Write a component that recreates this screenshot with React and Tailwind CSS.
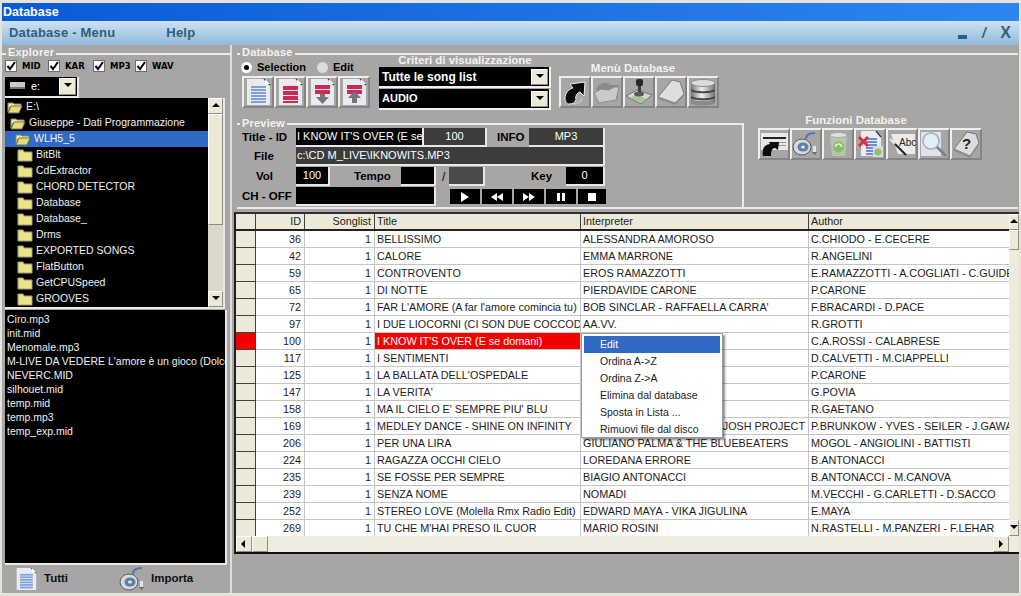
import React from 'react';

const SONGS = [
  ['36', 'BELLISSIMO', 'ALESSANDRA AMOROSO', 'C.CHIODO - E.CECERE'],
  ['42', 'CALORE', 'EMMA MARRONE', 'R.ANGELINI'],
  ['59', 'CONTROVENTO', 'EROS RAMAZZOTTI', 'E.RAMAZZOTTI - A.COGLIATI - C.GUIDETTI'],
  ['65', 'DI NOTTE', 'PIERDAVIDE CARONE', 'P.CARONE'],
  ['72', "FAR L'AMORE (A far l'amore comincia tu)", "BOB SINCLAR - RAFFAELLA CARRA'", 'F.BRACARDI - D.PACE'],
  ['97', 'I DUE LIOCORNI (CI SON DUE COCCODRILLI)', 'AA.VV.', 'R.GROTTI'],
  ['100', "I KNOW IT'S OVER (E se domani)", '', 'C.A.ROSSI - CALABRESE'],
  ['117', 'I SENTIMENTI', '', 'D.CALVETTI - M.CIAPPELLI'],
  ['125', "LA BALLATA DELL'OSPEDALE", '', 'P.CARONE'],
  ['147', "LA VERITA'", '', 'G.POVIA'],
  ['158', "MA IL CIELO E' SEMPRE PIU' BLU", '', 'R.GAETANO'],
  // il resto dell'interprete sta sotto il menu: si vede solo la coda
  ['169', 'MEDLEY DANCE - SHINE ON INFINITY', 'U JOSH PROJECT', 'P.BRUNKOW - YVES - SEILER - J.GAWA'],
  ['206', 'PER UNA LIRA', 'GIULIANO PALMA & THE BLUEBEATERS', 'MOGOL - ANGIOLINI - BATTISTI'],
  ['224', 'RAGAZZA OCCHI CIELO', 'LOREDANA ERRORE', 'B.ANTONACCI'],
  ['235', 'SE FOSSE PER SEMPRE', 'BIAGIO ANTONACCI', 'B.ANTONACCI - M.CANOVA'],
  ['239', 'SENZA NOME', 'NOMADI', 'M.VECCHI - G.CARLETTI - D.SACCO'],
  ['252', 'STEREO LOVE (Molella Rmx Radio Edit)', 'EDWARD MAYA - VIKA JIGULINA', 'E.MAYA'],
  ['269', "TU CHE M'HAI PRESO IL CUOR", 'MARIO ROSINI', 'N.RASTELLI - M.PANZERI - F.LEHAR'],
];

const FOLDERS = [
  ['E:\\', 0, true],
  ['Giuseppe - Dati Programmazione', 1, true],
  ['WLH5_5', 2, true],
  ['BitBlt', 3],
  ['CdExtractor', 3],
  ['CHORD DETECTOR', 3],
  ['Database', 3],
  ['Database_', 3],
  ['Drms', 3],
  ['EXPORTED SONGS', 3],
  ['FlatButton', 3],
  ['GetCPUSpeed', 3],
  ['GROOVES', 3],
];

const FILES = [
  'Ciro.mp3',
  'init.mid',
  'Menomale.mp3',
  "M-LIVE DA VEDERE L'amore è un gioco (Dolce",
  'NEVERC.MID',
  'silhouet.mid',
  'temp.mid',
  'temp.mp3',
  'temp_exp.mid',
];

const MENU_ITEMS = ['Edit', 'Ordina A->Z', 'Ordina Z->A', 'Elimina dal database', 'Sposta in Lista ...', 'Rimuovi file dal disco'];

const Doc = ({ lines = '#7f9fe0', rows = [8, 11, 14, 17, 20, 23], children }) => (
  <svg viewBox="0 0 28 28" className="w-[28px] h-[28px]">
    <path d="M3 1h18l5 5v21H3z" fill="#e9ebef" />
    <path d="M20 1l6 6" stroke="#333" strokeWidth="1.200" />
    <path d="M21 1l5 5h-5z" fill="#fff" />
    {rows.map((y) => (
      <rect key={y} x="7" y={y} width="15" height="2" fill={lines} />
    ))}
    {children}
  </svg>
);

const Speaker = () => (
  <svg viewBox="0 0 28 28" className="w-[28px] h-[28px]">
    <ellipse cx="10" cy="17" rx="9" ry="8" fill="#d5d8dc" stroke="#55585c" />
    <ellipse cx="11" cy="17" rx="5.5" ry="4.5" fill="#5f7fa3" />
    <ellipse cx="11" cy="17" rx="2" ry="1.6" fill="#dfe6ee" />
    <path d="M14 9c0-5 4-6 9-6" fill="none" stroke="#4c76b0" strokeWidth="2" />
    <rect x="21" y="16" width="3" height="6" fill="#e4e4e4" />
    <path d="M20 22h5l-2.500 3z" fill="#666" />
  </svg>
);

const ICONS = {
  blue: <Doc />,
  red: <Doc lines="#cf2a55" rows={[8, 10, 13, 15, 18, 20, 23]} />,
  redDown: (
    <Doc lines="#cf2a55" rows={[7, 9, 12, 14]}>
      <path d="M12 16h5v3h4l-6.500 7-6.500-7h4z" fill="#73767c" />
    </Doc>
  ),
  redUp: (
    <Doc lines="#cf2a55" rows={[7, 9, 12, 14]}>
      <path d="M14.500 13l6.500 7h-4v5h-5v-5h-4z" fill="#73767c" />
    </Doc>
  ),
  arrow: (
    <svg viewBox="0 0 28 28" className="w-[28px] h-[28px]">
      <path d="M8 26c-2 0-4-2-4-6 0-5 4-9 8-10l-3-4 15-2-1 14-4-4c-3 1-5 4-4 8-1 3-4 4-7 4z" fill="#0b0b0b" stroke="#f2f2f2" strokeWidth="1" />
      <path d="M12 26c4 0 8-2 9-6" fill="none" stroke="#bfc0bf" strokeWidth="2" />
    </svg>
  ),
  folder: (
    <svg viewBox="0 0 28 28" className="w-[28px] h-[28px]">
      <path d="M3 10l6-5h6l2 2h9l-2 15H6z" fill="#8a8c8c" />
      <path d="M1 15l7-4 8 1 5-3h5l-3 13-17 3z" fill="#c9cbcb" stroke="#8b8d8d" />
    </svg>
  ),
  joystick: (
    <svg viewBox="0 0 28 28" className="w-[28px] h-[28px]">
      <path d="M1 18l11-6 15 5-11 9z" fill="#d6d8d4" stroke="#707270" />
      <path d="M5 20l11 5 6-4-11-4z" fill="#a9c59a" />
      <rect x="13" y="5" width="3" height="11" fill="#3b3d40" />
      <rect x="11" y="1" width="7" height="7" rx="2" fill="#25272a" />
      <ellipse cx="14" cy="16" rx="5" ry="2.500" fill="#56585b" />
    </svg>
  ),
  diamond: (
    <svg viewBox="0 0 28 28" className="w-[28px] h-[28px]">
      <path d="M15 2l8 2 4 12-9 9-17-6z" fill="#dededc" stroke="#7c7c7a" />
      <path d="M1 19l17 6 9-9v2l-9 9-17-6z" fill="#8e8e8c" />
    </svg>
  ),
  database: (
    <svg viewBox="0 0 28 28" className="w-[28px] h-[28px]">
      <defs>
        <linearGradient id="silver" x1="0" x2="1" y1="0" y2="0">
          <stop offset="0" stopColor="#777" />
          <stop offset="0.45" stopColor="#f0f0f0" />
          <stop offset="1" stopColor="#6f6f6f" />
        </linearGradient>
      </defs>
      <rect x="2" y="5" width="24" height="20" fill="url(#silver)" />
      <path d="M2 11c4 3 20 3 24 0v2c-4 3-20 3-24 0zM2 18c4 3 20 3 24 0v2c-4 3-20 3-24 0z" fill="#454545" />
      <ellipse cx="14" cy="5" rx="12" ry="3.500" fill="#dcdcdc" stroke="#8c8c8c" />
      <ellipse cx="14" cy="25" rx="12" ry="2.500" fill="#8a8a8a" />
    </svg>
  ),
  bars: (
    <svg viewBox="0 0 28 28" className="w-[28px] h-[28px]">
      <rect x="1" y="3" width="27" height="17" fill="#e8e8e6" />
      <rect x="3" y="7" width="23" height="2" fill="#222" />
      <rect x="16" y="12" width="10" height="1" fill="#999" />
      <rect x="16" y="15" width="10" height="1" fill="#999" />
      <path d="M3 26c-1-6 0-11 7-12l-1-2 10 0-1 8-3-2c-3 0-4 3-4 8z" fill="#0b0b0b" />
    </svg>
  ),
  speaker: <Speaker />,
  bin: (
    <svg viewBox="0 0 28 28" className="w-[28px] h-[28px]">
      <path d="M6 5h17l-2 21H8z" fill="#b9c3b4" />
      <ellipse cx="14.500" cy="5" rx="8.500" ry="2.500" fill="#dfe2dc" stroke="#a4aaa1" />
      <circle cx="14.500" cy="17" r="5.500" fill="#86bd5e" />
      <path d="M11.500 17a3 3 0 0 1 6 0" fill="none" stroke="#e8f4df" strokeWidth="1.500" />
    </svg>
  ),
  docX: (
    <svg viewBox="0 0 28 28" className="w-[28px] h-[28px]">
      <path d="M5 1h15l5 5v20H5z" fill="#e9ebef" />
      <path d="M20 1l5 6" stroke="#333" strokeWidth="1.200" />
      {[8, 11, 14, 17, 20, 23].map((y) => (
        <rect key={y} x="10" y={y} width="11" height="2" fill="#6d8cd2" />
      ))}
      <path d="M3 7l9 9M12 7l-9 9" stroke="#d9303c" strokeWidth="3" />
      <rect x="17" y="16" width="10" height="11" fill="#d7dcd3" />
      <circle cx="22" cy="22" r="3.500" fill="#8fc06a" />
    </svg>
  ),
  abc: (
    <svg viewBox="0 0 28 28" className="w-[28px] h-[28px]">
      <path d="M3 4h24v20H10z" fill="#ececea" />
      <text x="11" y="16" fontSize="10" fontFamily="Liberation Sans, sans-serif" fill="#222">Abc</text>
      <path d="M6 13l12 12" stroke="#222" strokeWidth="2" />
      <path d="M2 9l5 5" stroke="#e9e9e9" strokeWidth="2" />
    </svg>
  ),
  search: (
    <svg viewBox="0 0 28 28" className="w-[28px] h-[28px]">
      <rect x="1" y="2" width="20" height="24" fill="#dfe3ea" />
      <circle cx="11" cy="11" r="8" fill="#e4eef7" stroke="#9ab0c6" strokeWidth="1.500" />
      <path d="M17 17l9 9" stroke="#7c8084" strokeWidth="2.500" />
    </svg>
  ),
  help: (
    <svg viewBox="0 0 28 28" className="w-[28px] h-[28px]">
      <path d="M15 2l9 2 3 9-9 13-16-7z" fill="#dcdcda" stroke="#777" />
      <path d="M2 19l16 7 9-13v2l-9 13-16-7z" fill="#8e8e8c" />
      <text x="10" y="19" fontSize="15" fontWeight="700" fontFamily="Liberation Sans, sans-serif" fill="#222">?</text>
    </svg>
  ),
};

const IconButton = ({ name }) => (
  <div className="w-[32px] h-[32px] shrink-0 flex items-center justify-center border-2 border-t-[#efefed] border-l-[#efefed] border-b-[#858482] border-r-[#858482] bg-[#a7a6a4]">
    {ICONS[name]}
  </div>
);

const Legend = ({ children, className = '' }) => (
  <div className={`h-[14px] w-fit bg-[#a7a6a4] px-[2px] text-[11px] leading-[14px] font-bold tracking-[0.2px] text-[#f2f2f0] ${className}`}>
    {children}
  </div>
);

const Tri = ({ dir }) => {
  const points = { up: '0,5 8,5 4,1', down: '0,1 8,1 4,5', left: '5,0 5,8 1,4', right: '2,0 2,8 6,4' }[dir];
  return (
    <svg viewBox="0 0 8 8" className="w-[8px] h-[8px]">
      <polygon points={points} fill="#000" />
    </svg>
  );
};

const ScrollButton = ({ dir, className = '' }) => (
  <div className={`shrink-0 flex items-center justify-center bg-[#ece9d8] border border-t-white border-l-white border-b-[#8f8d80] border-r-[#8f8d80] ${className}`}>
    <Tri dir={dir} />
  </div>
);

const Combo = ({ text, className = '', textClass = '' }) => (
  <div className={`flex items-center bg-black border-b-2 border-r-2 border-[#f0f0ee] ${className}`}>
    <div className={`flex-1 min-w-0 truncate text-white ${textClass}`}>{text}</div>
    <ScrollButton dir="down" className="w-[17px] h-[16px] mr-[1px]" />
  </div>
);

const FileType = ({ label, className }) => (
  <div className={`flex items-center ${className}`}>
    <div className="w-[12px] h-[12px] bg-white border border-[#6d6d6b] flex items-center justify-center shrink-0">
      <svg viewBox="0 0 10 10" className="w-[10px] h-[10px]">
        <path d="M1.500 5l2.500 3 5-7" fill="none" stroke="#000" strokeWidth="2" />
      </svg>
    </div>
    <span className="ml-[5px] font-['DejaVu_Sans'] text-[8.5px] font-bold text-black">{label}</span>
  </div>
);

const FolderIcon = ({ open }) => (
  <svg viewBox="0 0 16 14" className="w-[16px] h-[14px] shrink-0">
    {open ? (
      <>
        <path d="M1 3h5l1 1h7v3H3L1 12z" fill="#f4eca6" stroke="#8a8a6a" />
        <path d="M1 13l3-7h11l-3 7z" fill="#e4dc7c" stroke="#70704c" />
      </>
    ) : (
      <>
        <path d="M1 2h5l1 2h8v9H1z" fill="#e6df8a" stroke="#a8a464" />
        <rect x="2" y="5" width="12" height="7" fill="#ebe586" />
      </>
    )}
  </svg>
);

const Field = ({ children, className = '' }) => (
  <div className={`h-[19px] flex items-center overflow-hidden whitespace-nowrap border-b-2 border-r-2 border-[#e8e8e6] text-[11px] text-white ${className}`}>
    {children}
  </div>
);

const PreviewLabel = ({ children, className = '' }) => (
  <span className={`text-[11.5px] font-bold text-black ${className}`}>{children}</span>
);

const TransportButton = ({ w, children }) => (
  <div className={`h-[15px] bg-black flex items-center justify-center gap-[1px] ${w}`}>{children}</div>
);

const Explorer = () => (
  <div className="w-[230px] shrink-0 border-r-2 border-[#dededc] flex flex-col">
    <div className="mt-[8px] -mr-[1px] border-t-2 border-[#ebebe9] h-[10px]">
      <Legend className="ml-[4px] -mt-[10px]">Explorer</Legend>
    </div>
    <div className="flex items-center h-[14px] -mt-[4px] ml-[3px]">
      <FileType label="MID" className="w-[43px]" />
      <FileType label="KAR" className="w-[45px]" />
      <FileType label="MP3" className="w-[42px]" />
      <FileType label="WAV" className="w-[40px]" />
    </div>
    <div className="ml-[3px] mt-[4px] w-[74px] h-[21px] bg-black flex items-center border-b-2 border-r-2 border-[#e8e8e6]">
      <svg viewBox="0 0 16 10" className="w-[16px] h-[10px] ml-[5px] shrink-0">
        <rect x="0" y="1" width="15" height="7" fill="#c9c9c9" />
        <rect x="0" y="6" width="15" height="2" fill="#777" />
      </svg>
      <span className="ml-[5px] flex-1 text-[11px] text-white">e:</span>
      <ScrollButton dir="down" className="w-[17px] h-[17px] mr-[1px]" />
    </div>
    <div className="ml-[3px] w-[220px] h-[212px] flex border-b-2 border-r-2 border-[#e8e8e6]">
      <div className="w-[203px] bg-black pt-[1px] overflow-hidden">
        {FOLDERS.map(([name, level, open]) => {
          const levelClass = ['pl-[2px]', 'pl-[5px]', 'pl-[10px]', 'pl-[12px]'][level];
          const selected = name === 'WLH5_5';
          return (
            <div key={name} className={`h-[16px] flex items-center gap-[3px] ${levelClass} ${selected ? 'bg-[#316ac5]' : ''}`}>
              <FolderIcon open={open} />
              <span className="text-[10.5px] text-[#f0f0f0] whitespace-nowrap">{name}</span>
            </div>
          );
        })}
      </div>
      <div className="flex-1 flex flex-col bg-[#d9d8c9]">
        <ScrollButton dir="up" className="h-[16px]" />
        <div className="h-[111px] bg-[#ece9d8] border border-t-white border-l-white border-b-[#8f8d80] border-r-[#8f8d80]" />
        <div className="flex-1" />
        <ScrollButton dir="down" className="h-[16px]" />
      </div>
    </div>
    <div className="ml-[3px] mt-[1px] w-[222px] h-[257px] bg-black border-b-2 border-r-2 border-[#e8e8e6] pt-[2px] pl-[2px] overflow-hidden">
      {FILES.map((f) => (
        <div key={f} className="h-[14px] leading-[14px] text-[10.5px] text-[#f0f0f0] whitespace-nowrap">{f}</div>
      ))}
    </div>
    <div className="flex items-center flex-1 pl-[10px]">
      <div className="scale-[0.85]">{ICONS.blue}</div>
      <span className="ml-[4px] text-[11.5px] font-bold text-[#101010]">Tutti</span>
      <div className="ml-[51px]">{ICONS.speaker}</div>
      <span className="ml-[4px] text-[11.5px] font-bold text-[#101010]">Importa</span>
    </div>
  </div>
);

const Toolbar = () => (
  <div className="ml-[5px] mr-[1px] mt-[8px] h-[156px] border-y-2 border-[#ebebe9] flex">
    <div className="w-[507px] shrink-0 flex flex-col">
      <Legend className="ml-[3px] -mt-[10px]">Database</Legend>
      <div className="flex -mt-[5px] pl-[5px] h-[70px]">
        <div className="w-[137px] shrink-0 flex flex-col">
          <div className="mt-[6px] h-[14px] flex items-center text-[11px] font-bold text-black">
            <div className="w-[11px] h-[11px] rounded-full bg-white flex items-center justify-center -ml-[1px]">
              <div className="w-[5px] h-[5px] rounded-full bg-black" />
            </div>
            <span className="ml-[5px]">Selection</span>
            <div className="ml-[11px] w-[11px] h-[11px] rounded-full bg-[#dcdcda]" />
            <span className="ml-[5px]">Edit</span>
          </div>
          <div className="mt-[2px] flex">
            <IconButton name="blue" />
            <IconButton name="red" />
            <IconButton name="redDown" />
            <IconButton name="redUp" />
          </div>
        </div>
        <div className="w-[172px] shrink-0 flex flex-col">
          <div className="h-[13px] text-center text-[11.5px] leading-[13px] font-bold text-[#f2f2f0]">Criteri di visualizzazione</div>
          <Combo text="Tutte le song list" className="h-[21px]" textClass="pl-[3px] text-[12px] font-bold" />
          <Combo text="AUDIO" className="h-[21px] mt-[1px]" textClass="pl-[3px] text-[11px] font-bold" />
        </div>
        <div className="ml-[8px] flex flex-col">
          <div className="mt-[6px] h-[16px] pr-[12px] text-center text-[11.5px] leading-[16px] font-bold text-[#f2f2f0]">Menù Database</div>
          <div className="flex">
            {['arrow', 'folder', 'joystick', 'diamond', 'database'].map((n) => <IconButton key={n} name={n} />)}
          </div>
        </div>
      </div>
      <div className="h-[85px] border-t-2 border-r-2 border-[#ebebe9] pl-[5px] flex flex-col">
        <Legend className="-ml-[2px] -mt-[9px]">Preview</Legend>
        <div className="flex items-center -mt-[2px]">
          <PreviewLabel className="w-[54px]">Title - ID</PreviewLabel>
          <Field className="w-[128px] bg-black pl-[1px]">I KNOW IT'S OVER (E se domani)</Field>
          <Field className="w-[63px] bg-[#3c3c3c] justify-center">100</Field>
          <PreviewLabel className="ml-[10px] w-[32px]">INFO</PreviewLabel>
          <Field className="w-[76px] bg-[#3c3c3c] justify-center">MP3</Field>
        </div>
        <div className="flex items-center">
          <PreviewLabel className="w-[54px] pl-[12px]">File</PreviewLabel>
          <Field className="w-[309px] bg-[#3c3c3c] pl-[1px]">c:\CD M_LIVE\IKNOWITS.MP3</Field>
        </div>
        <div className="flex items-center mt-[1px]">
          <PreviewLabel className="w-[54px] pl-[14px]">Vol</PreviewLabel>
          <Field className="w-[34px] bg-black justify-center">100</Field>
          <PreviewLabel className="ml-[24px] w-[47px]">Tempo</PreviewLabel>
          <Field className="w-[35px] bg-black" />
          <span className="ml-[6px] w-[7px] text-[12px] text-black">/</span>
          <Field className="w-[36px] bg-[#4a4a4a]" />
          <PreviewLabel className="ml-[46px] w-[35px]">Key</PreviewLabel>
          <Field className="w-[39px] bg-black justify-center">0</Field>
        </div>
        <div className="flex items-center mt-[1px]">
          <PreviewLabel className="w-[54px]">CH - OFF</PreviewLabel>
          <Field className="w-[140px] bg-black" />
          <div className="ml-[14px] flex gap-[2px]">
            <TransportButton w="w-[30px]"><svg viewBox="0 0 8 10" className="w-[8px] h-[10px]"><polygon points="0,0 8,5 0,10" fill="#fff" /></svg></TransportButton>
            <TransportButton w="w-[30px]"><svg viewBox="0 0 12 8" className="w-[12px] h-[8px]"><polygon points="6,0 6,8 0,4" fill="#fff" /><polygon points="12,0 12,8 6,4" fill="#fff" /></svg></TransportButton>
            <TransportButton w="w-[30px]"><svg viewBox="0 0 12 8" className="w-[12px] h-[8px]"><polygon points="0,0 0,8 6,4" fill="#fff" /><polygon points="6,0 6,8 12,4" fill="#fff" /></svg></TransportButton>
            <TransportButton w="w-[30px]"><div className="w-[3px] h-[8px] bg-white mr-[1px]" /><div className="w-[3px] h-[8px] bg-white" /></TransportButton>
            <TransportButton w="w-[28px]"><div className="w-[8px] h-[8px] bg-white" /></TransportButton>
          </div>
        </div>
      </div>
    </div>
    <div className="ml-[14px] mt-[58px]">
      <div className="h-[14px] mb-[1px] pr-[28px] text-center text-[11.5px] leading-[14px] font-bold text-[#f2f2f0]">Funzioni Database</div>
      <div className="flex">
        {['bars', 'speaker', 'bin', 'docX', 'abc', 'search', 'help'].map((n) => <IconButton key={n} name={n} />)}
      </div>
    </div>
  </div>
);

const cell = 'h-full flex items-center overflow-hidden whitespace-nowrap border-r border-[#c4c4c0]';

const SongRow = ({ song }) => {
  const [id, title, artist, author] = song;
  const selected = id === '100';
  return (
    <div className="h-[17px] flex text-[10.8px] text-[#1c1c1c] border-b border-[#c4c4c0]">
      <div className={`w-[20px] shrink-0 border-r border-b border-[#404040] -mb-[1px] ${selected ? 'bg-[#f40000]' : 'bg-[#ece9d8]'}`} />
      <div className={`${cell} w-[49px] justify-end pr-[3px]`}>{id}</div>
      <div className={`${cell} w-[70px] justify-end pr-[3px]`}>1</div>
      <div className={`${cell} w-[206px] pl-[2px] ${selected ? 'bg-[#f40000] text-white' : ''}`}>{title}</div>
      <div className={`${cell} w-[228px] ${id === '169' ? 'justify-end pr-[3px]' : 'pl-[2px]'}`}>{artist}</div>
      <div className={`${cell} flex-1 min-w-0 pl-[2px] border-r-0`}>{author}</div>
    </div>
  );
};

const SongTable = () => (
  <div className="relative ml-[2px] mt-[3px] h-[342px] border-t-2 border-l-2 border-b-2 border-t-[#303030] border-l-[#202020] border-b-[#101010] flex flex-col bg-white">
    <div className="flex flex-1 min-h-0">
      <div className="flex-1 min-w-0">
        <div className="h-[17px] flex text-[10.8px] leading-[15px] text-[#1c1c1c] bg-[#ece9d8] border-b-2 border-[#222]">
          <div className="w-[20px] border-r border-[#404040]" />
          <div className="w-[49px] border-r border-[#404040] text-right pr-[3px]">ID</div>
          <div className="w-[70px] border-r border-[#404040] text-right pr-[3px]">Songlist</div>
          <div className="w-[206px] border-r border-[#404040] pl-[2px]">Title</div>
          <div className="w-[228px] border-r border-[#404040] pl-[2px]">Interpreter</div>
          <div className="flex-1 pl-[2px]">Author</div>
        </div>
        {SONGS.map((s) => <SongRow key={s[0]} song={s} />)}
      </div>
      <div className="w-[10px] shrink-0 flex flex-col bg-[#eeecdf]">
        <ScrollButton dir="up" className="h-[16px]" />
        <div className="h-[20px] bg-[#ece9d8] border border-t-white border-l-white border-b-[#8f8d80] border-r-[#8f8d80]" />
        <div className="flex-1" />
        <ScrollButton dir="down" className="h-[16px]" />
      </div>
    </div>
    <div className="h-[16px] shrink-0 flex bg-[#eeecdf]">
      <ScrollButton dir="left" className="w-[16px]" />
      <div className="w-[16px] bg-[#ece9d8] border border-t-white border-l-white border-b-[#8f8d80] border-r-[#8f8d80]" />
      <div className="flex-1" />
      <ScrollButton dir="right" className="w-[16px] mr-[10px]" />
    </div>
    <div className="absolute left-[345px] top-[119px] w-[142px] h-[105px] bg-white border border-[#9a9a9a] p-[2px] text-[10.5px] text-[#1c1c1c] shadow-[2px_2px_2px_rgba(0,0,0,0.45)]">
      {MENU_ITEMS.map((item, i) => (
        <div key={item} className={`h-[17px] leading-[17px] pl-[16px] ${i === 0 ? 'bg-[#316ac5] text-white' : ''}`}>{item}</div>
      ))}
    </div>
  </div>
);

const App = () => (
  <div className="w-[1021px] h-[596px] overflow-hidden flex flex-col bg-[#a7a6a4] border-x-2 border-t-[3px] border-b-[3px] border-[#e4e3dc] font-['Liberation_Sans',Arial,sans-serif]">
    <div className="h-[18px] shrink-0 flex items-center pl-[1px] bg-linear-to-r from-[#0a5ad6] to-[#2d86ee] text-[12.500px] font-bold text-white">Database</div>
    <div className="h-[24px] shrink-0 flex items-center bg-linear-to-b from-[#cfe2f2] to-[#8fb9dc] text-[13px] font-bold tracking-[0.2px] text-[#2f5f7c]">
      <span className="ml-[7px]">Database - Menu</span>
      <span className="ml-[51px]">Help</span>
      <div className="ml-auto mr-[8px] flex items-center">
        <div className="w-[9px] h-[4px] bg-[#2f5f7c] mt-[8px]" />
        <span className="ml-[15px] italic text-[14px]">/</span>
        <span className="ml-[14px] text-[16px]">X</span>
      </div>
    </div>
    <div className="flex flex-1 min-h-0">
      <Explorer />
      <div className="flex-1 min-w-0 flex flex-col">
        <Toolbar />
        <SongTable />
      </div>
    </div>
  </div>
);

export default App;
